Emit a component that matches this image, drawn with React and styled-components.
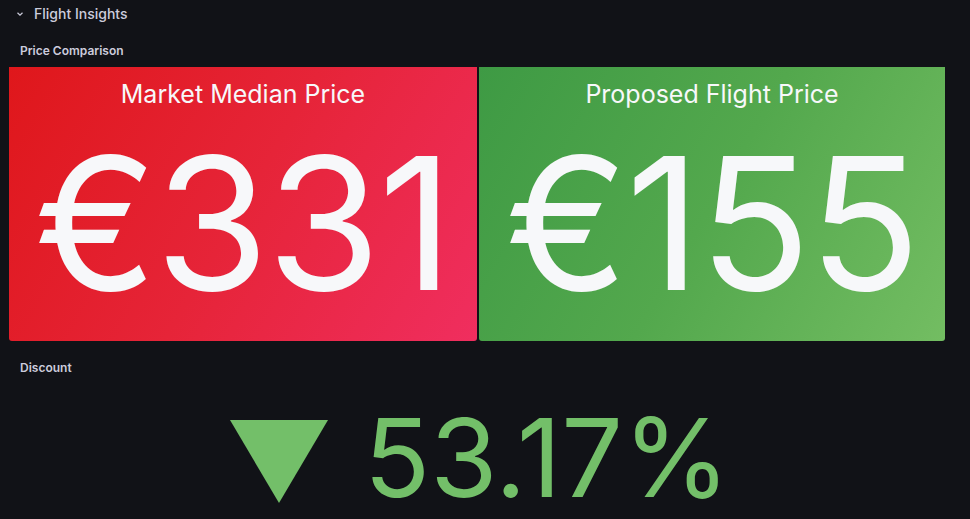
import styled, { createGlobalStyle } from "styled-components";

const GlobalStyle = createGlobalStyle`
    body {
        margin: 0;
        background: #111217;
        font-family: Inter, "Noto Sans", sans-serif;
        color: #ccccdc;
        overflow: hidden;
    }
`;

const Page = styled.div`
    width: 970px;
    height: 519px;
    padding: 0 25px 0 9px;
    box-sizing: border-box;
    display: flex;
    flex-direction: column;
`;

const RowHeader = styled.div`
    height: 27px;
    display: flex;
    align-items: center;
    gap: 10px;
    padding-left: 7px;
    font-size: 14px;
    font-weight: 500;
    color: #ccccdc;
`;

const PanelTitle = styled.div`
    height: 40px;
    display: flex;
    align-items: center;
    padding-left: 11px;
    font-size: 12px;
    font-weight: 600;
    color: #ccccdc;
`;

const PriceTitle = styled(PanelTitle)`
    padding-top: 6px;
    height: 34px;
`;

const StatRow = styled.div`
    display: flex;
    gap: 2px;
    height: 274px;
`;

const StatCard = styled.div`
    flex: ${(p) => p.$grow};
    border-radius: 0 0 3px 3px;
    background: ${(p) => p.$bg};
    color: #f7f8fa;
    display: flex;
    flex-direction: column;
    align-items: center;
`;

const StatLabel = styled.div`
    margin-top: 12px;
    font-size: 25px;
    line-height: 30px;
    font-weight: 400;
`;

const StatValue = styled.div`
    margin-top: 22px;
    font-size: 184px;
    line-height: 184px;
    font-weight: 400;
    letter-spacing: -2px;
`;

const DiscountTitle = styled(PanelTitle)`
    margin-top: 6px;
`;

const DiscountValue = styled.div`
    display: flex;
    justify-content: center;
    align-items: center;
    gap: 36px;
    margin-top: 20px;
    color: #73bf69;
    font-size: 109px;
    line-height: 100px;
    font-weight: 400;
`;

const Arrow = styled.svg`
    margin-top: 8px;
    margin-left: 6px;
`;

const Chevron = () => (
    <svg width="8" height="8" viewBox="0 0 8 8">
        <path d="M1.5 2.8 L4 5.2 L6.5 2.8" stroke="#ccccdc" strokeWidth="1.2" fill="none" />
    </svg>
);

const TriangleDown = () => (
    <Arrow width="98" height="83" viewBox="0 0 98 83">
        <polygon points="0,0 98,0 49,83" fill="#73bf69" />
    </Arrow>
);

const prices = [
    { label: "Market Median Price", value: "€331", bg: "linear-gradient(120deg, #df171b 0%, #e62438 50%, #f02e5f 100%)", grow: 468 },
    { label: "Proposed Flight Price", value: "€155", bg: "linear-gradient(120deg, #3e9a44 0%, #53a84d 50%, #73bd62 100%)", grow: 466 },
];

export default function App() {
    return (
        <>
            <GlobalStyle />
            <Page>
                <RowHeader>
                    <Chevron />
                    <span>Flight Insights</span>
                </RowHeader>
                <PriceTitle>Price Comparison</PriceTitle>
                <StatRow>
                    {prices.map((p) => (
                        <StatCard key={p.label} $bg={p.bg} $grow={p.grow}>
                            <StatLabel>{p.label}</StatLabel>
                            <StatValue>{p.value}</StatValue>
                        </StatCard>
                    ))}
                </StatRow>
                <DiscountTitle>Discount</DiscountTitle>
                <DiscountValue>
                    <TriangleDown />
                    <span>53.17%</span>
                </DiscountValue>
            </Page>
        </>
    );
}
